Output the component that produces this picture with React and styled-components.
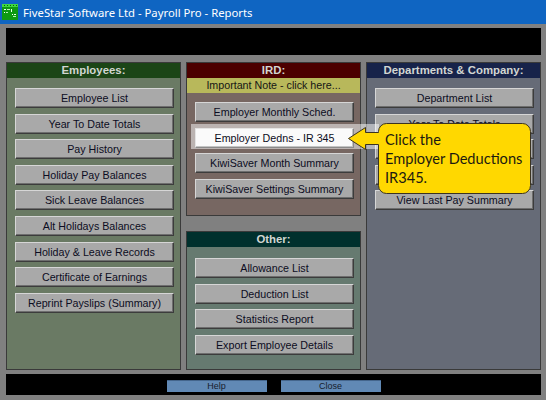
import React from "react";
import styled, { createGlobalStyle } from "styled-components";

const GlobalStyle = createGlobalStyle`
  html, body {
    margin: 0;
    padding: 0;
    background: #808080;
  }
  * {
    box-sizing: border-box;
  }
`;

const employeeReports = [
  "Employee List",
  "Year To Date Totals",
  "Pay History",
  "Holiday Pay Balances",
  "Sick Leave Balances",
  "Alt Holidays Balances",
  "Holiday & Leave Records",
  "Certificate of Earnings",
  "Reprint Payslips (Summary)",
];

const irdReports = [
  { label: "Employer Monthly Sched." },
  { label: "Employer Dedns - IR 345", active: true },
  { label: "KiwiSaver Month Summary" },
  { label: "KiwiSaver Settings Summary" },
];

const otherReports = [
  "Allowance List",
  "Deduction List",
  "Statistics Report",
  "Export Employee Details",
];

// 3rd and 4th labels are hidden under the callout in the screenshot
const companyReports = [
  "Department List",
  "Year To Date Totals",
  "",
  "",
  "View Last Pay Summary",
];

function AppIcon() {
  return (
    <svg width="16" height="16" viewBox="0 0 16 16">
      <rect x="0" y="0" width="16" height="16" fill="#0e9a12" />
      <rect x="0" y="0" width="16" height="3" fill="#3fd83f" />
      <rect x="2" y="1" width="1" height="1" fill="#0b5a0b" />
      <rect x="5" y="1" width="1" height="1" fill="#0b5a0b" />
      <rect x="8" y="1" width="1" height="1" fill="#0b5a0b" />
      <rect x="11" y="1" width="1" height="1" fill="#0b5a0b" />
      <rect x="14" y="1" width="1" height="1" fill="#0b5a0b" />
      <rect x="2" y="5" width="2" height="1" fill="#e8ffe8" />
      <rect x="5" y="5" width="3" height="1" fill="#b8f0b8" />
      <rect x="9" y="5" width="1" height="3" fill="#e8ffe8" />
      <rect x="2" y="8" width="1" height="1" fill="#ffffff" />
      <rect x="4" y="8" width="2" height="1" fill="#b8f0b8" />
      <rect x="10" y="10" width="1" height="1" fill="#ffffff" />
      <rect x="12" y="10" width="2" height="1" fill="#e8ffe8" />
      <rect x="11" y="12" width="3" height="1" fill="#b8f0b8" />
    </svg>
  );
}

function Panel({ title, header, body, note, grow, fixedHeight, top = 10, children }) {
  return (
    <PanelBox $body={body} $grow={grow} $height={fixedHeight}>
      <PanelHeader $bg={header}>{title}</PanelHeader>
      {note && <NoteBar>{note}</NoteBar>}
      <ButtonList $top={top}>{children}</ButtonList>
    </PanelBox>
  );
}

export default function App() {
  return (
    <>
      <GlobalStyle />
      <Window>
        <TitleBar>
          <AppIcon />
          <TitleText>FiveStar Software Ltd - Payroll Pro - Reports</TitleText>
        </TitleBar>

        <Content>
          <TopBar />

          <Columns>
            <Panel title="Employees:" header="#1b4516" body="#6a7a64">
              {employeeReports.map((label) => (
                <ReportButton key={label}>{label}</ReportButton>
              ))}
            </Panel>

            <MiddleColumn>
              <Panel
                title="IRD:"
                header="#4c0000"
                body="#776762"
                note="Important Note - click here..."
                fixedHeight={154}
                top={9}
              >
                {irdReports.map((item) => (
                  <ReportButton key={item.label} $active={item.active}>
                    {item.label}
                  </ReportButton>
                ))}
              </Panel>

              <Panel title="Other:" header="#00302d" body="#667a70" grow top={11}>
                {otherReports.map((label) => (
                  <ReportButton key={label}>{label}</ReportButton>
                ))}
              </Panel>
            </MiddleColumn>

            <Panel
              title="Departments & Company:"
              header="#17234a"
              body="#666b77"
            >
              {companyReports.map((label, i) => (
                <ReportButton key={i}>{label}</ReportButton>
              ))}
            </Panel>
          </Columns>

          <BottomBar>
            <BarButton>Help</BarButton>
            <BarButton>Close</BarButton>
          </BottomBar>
        </Content>

        <Halo />

        <Callout>
          <svg width="185" height="73" viewBox="0 0 185 73">
            <path
              d="M39.5,1.5 H175.5 A8,8 0 0 1 183.5,9.5 V63.5 A8,8 0 0 1 175.5,71.5 H39.5 A8,8 0 0 1 31.5,63.5 V22.5 H18.5 V27.5 L1.5,16.5 L18.5,5.5 V10.5 H31.5 V9.5 A8,8 0 0 1 39.5,1.5 Z"
              fill="#ffd800"
              stroke="#3b3320"
              strokeWidth="1"
            />
          </svg>
          <CalloutText>
            Click the
            <br />
            Employer Deductions
            <br />
            IR345.
          </CalloutText>
        </Callout>
      </Window>
    </>
  );
}

const Window = styled.div`
  position: relative;
  width: 546px;
  height: 400px;
  background: #808080;
  display: flex;
  flex-direction: column;
  overflow: hidden;
`;

const TitleBar = styled.div`
  height: 24px;
  background: #0f65c2;
  display: flex;
  align-items: center;
  gap: 5px;
  padding: 0 0 0 2px;

  & svg {
    flex: none;
    margin-top: -1px;
  }
`;

const TitleText = styled.div`
  font-family: "Noto Sans", "Open Sans", sans-serif;
  font-size: 11.3px;
  color: #ffffff;
  white-space: nowrap;
`;

const Content = styled.div`
  flex: 1;
  display: flex;
  flex-direction: column;
  padding: 4px 5px 0 6px;
`;

const TopBar = styled.div`
  height: 27px;
  background: #000000;
`;

const Columns = styled.div`
  margin-top: 7px;
  height: 308px;
  display: grid;
  grid-template-columns: 175px 175px 175px;
  column-gap: 5px;
`;

const MiddleColumn = styled.div`
  display: flex;
  flex-direction: column;
  gap: 15px;
`;

const PanelBox = styled.div`
  display: flex;
  flex-direction: column;
  border: 1px solid #3a3a3a;
  background: ${(props) => props.$body};
  ${(props) => (props.$height ? `height: ${props.$height}px; flex: none;` : "")}
  ${(props) => (props.$grow ? "flex: 1;" : "")}
`;

const PanelHeader = styled.div`
  height: 15px;
  line-height: 15px;
  background: ${(props) => props.$bg};
  color: #d2d6d2;
  font-family: "Liberation Sans", Arial, sans-serif;
  font-weight: bold;
  font-size: 11.4px;
  text-align: center;
  white-space: nowrap;
`;

const NoteBar = styled.div`
  height: 15px;
  line-height: 15px;
  background: #b8b85b;
  color: #151515;
  font-family: "Liberation Sans", Arial, sans-serif;
  font-size: 10.7px;
  text-align: center;
`;

const ButtonList = styled.div`
  display: flex;
  flex-direction: column;
  gap: 5.6px;
  padding: ${(props) => props.$top}px 6px 0 8px;
`;

const ReportButton = styled.div`
  height: 20px;
  display: flex;
  align-items: center;
  justify-content: center;
  background: ${(props) => (props.$active ? "#fafafa" : "#a9a9a9")};
  border: 1px solid;
  border-color: ${(props) =>
    props.$active
      ? "#e4e4e4 #8a8a8a #8a8a8a #e4e4e4"
      : "#d6d6d6 #3c3c3c #3c3c3c #d6d6d6"};
  box-shadow: inset -1px -1px 0 ${(props) => (props.$active ? "#c4c4c4" : "#6e6e6e")};
  color: #0c0c22;
  font-family: "Liberation Sans", Arial, sans-serif;
  font-size: 10.7px;
  white-space: nowrap;
  ${(props) => (props.$active ? "position: relative; z-index: 2;" : "")}
`;

const BottomBar = styled.div`
  margin-top: 4px;
  height: 21px;
  background: #000000;
  display: flex;
  justify-content: center;
  align-items: flex-start;
  gap: 14px;
  padding-top: 6px;
`;

const BarButton = styled.div`
  width: 100px;
  height: 12px;
  background: #6189b5;
  border-top: 1px solid #44658c;
  color: #16202c;
  font-family: "Liberation Sans", Arial, sans-serif;
  font-size: 9px;
  line-height: 11px;
  text-align: center;
`;

const Halo = styled.div`
  position: absolute;
  z-index: 1;
  left: 191px;
  top: 124px;
  width: 188px;
  height: 25px;
  background: rgba(255, 255, 255, 0.5);
  pointer-events: none;
`;

const Callout = styled.div`
  position: absolute;
  z-index: 3;
  left: 347px;
  top: 122px;
  width: 185px;
  height: 73px;

  & svg {
    position: absolute;
    left: 0;
    top: 0;
  }
`;

const CalloutText = styled.div`
  position: relative;
  padding: 8px 0 0 38px;
  font-family: Lato, "Open Sans", sans-serif;
  font-size: 14.6px;
  line-height: 19px;
  color: #1c1a10;
  white-space: nowrap;
`;
